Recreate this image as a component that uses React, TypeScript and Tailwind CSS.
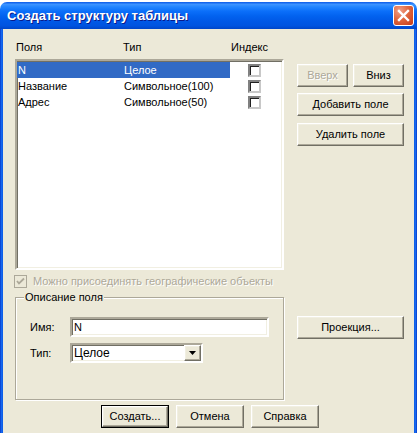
import type { ReactNode } from 'react';

const FIELDS = [
  { name: 'N', type: 'Целое' },
  { name: 'Название', type: 'Символьное(100)' },
  { name: 'Адрес', type: 'Символьное(50)' },
];

const raised =
  'border border-t-white border-l-white border-b-[#716f64] border-r-[#716f64] shadow-[inset_-1px_-1px_0_#aca899,inset_1px_1px_0_#f1efe2] bg-[#ece9d8]';
const sunken =
  'border-2 border-t-[#aca899] border-l-[#aca899] border-b-white border-r-white shadow-[inset_1px_1px_0_#716f64,inset_-1px_-1px_0_#f1efe2]';

function Btn({
  children,
  className = '',
  disabled = false,
  isDefault = false,
}: {
  children: ReactNode;
  className?: string;
  disabled?: boolean;
  isDefault?: boolean;
}) {
  const inner = (
    <div
      className={`flex h-full w-full items-center justify-center ${raised} ${
        disabled ? 'text-[#aca899] [text-shadow:1px_1px_0_#fff]' : 'text-black'
      }`}
    >
      {children}
    </div>
  );
  if (isDefault) {
    return <div className={`h-[23px] border border-black ${className}`}>{inner}</div>;
  }
  return <div className={`h-[23px] ${className}`}>{inner}</div>;
}

function CheckBox() {
  return (
    <div className="ml-[18px] h-[13px] w-[13px] shrink-0 border-2 border-t-[#808080] border-l-[#808080] border-b-[#c8c8c8] border-r-[#c8c8c8] bg-white shadow-[inset_1px_1px_0_#202020]" />
  );
}

export default function App() {
  return (
    <div className="h-[433px] w-[417px] overflow-hidden bg-white font-['Liberation_Sans',Arial,sans-serif] text-[11px] leading-[13px] text-black">
      <div className="mt-[2px] flex h-[431px] flex-col overflow-hidden rounded-t-[7px]">
        {/* title bar */}
        <div className="flex h-[27px] shrink-0 items-center bg-[linear-gradient(180deg,#0a5ae8_0%,#3c93ff_9%,#2285ff_18%,#0b6ffa_34%,#0262ef_52%,#0058e6_72%,#0054e0_88%,#0045c8_100%)] pl-[7px] pr-[3px]">
          <span className="flex-1 font-['Liberation_Sans',Arial,sans-serif] text-[13px] font-bold text-white [text-shadow:1px_1px_0_#0a1a8a]">
            Создать структуру таблицы
          </span>
          <span className="flex h-[21px] w-[21px] items-center justify-center rounded-[3px] border border-white bg-[radial-gradient(circle_at_30%_25%,#f0a088_0%,#e06840_45%,#c53a17_100%)]">
            <svg width="13" height="13" viewBox="0 0 13 13">
              <path d="M2 2 L11 11 M11 2 L2 11" stroke="#fff" strokeWidth="2.4" strokeLinecap="square" />
            </svg>
          </span>
        </div>

        <div className="flex flex-1">
          <div className="w-[3px] bg-[linear-gradient(90deg,#0838c8,#1668ee,#0b5ae6)]" />
          <div className="flex flex-1 flex-col bg-[#ece9d8] pl-[12px]">
            <div className="flex">
              {/* left column */}
              <div className="flex w-[269px] flex-col">
                <div className="mt-[12px] flex h-[13px]">
                  <span className="w-[108px] pl-[1px]">Поля</span>
                  <span className="w-[108px]">Тип</span>
                  <span>Индекс</span>
                </div>

                <div className={`mt-[5px] h-[211px] bg-white ${sunken} pt-[1px]`}>
                  {FIELDS.map((f, i) => (
                    <div key={f.name} className="flex h-[16px] items-center">
                      <div
                        className={`flex h-full w-[213px] items-center ${
                          i === 0 ? 'bg-[#316ac5] text-white' : ''
                        }`}
                      >
                        <span className="w-[107px] pl-[1px]">{f.name}</span>
                        <span>{f.type}</span>
                      </div>
                      <CheckBox />
                    </div>
                  ))}
                </div>

                <div className="-ml-[1px] mt-[5px] flex h-[13px] items-center gap-[6px]">
                  <span className="flex h-[13px] w-[13px] items-center justify-center border border-[#aca899] bg-[#ece9d8]">
                    <svg width="9" height="9" viewBox="0 0 9 9">
                      <path d="M1 4 L3 6.5 L8 1.5" stroke="#aca899" strokeWidth="1.8" fill="none" />
                    </svg>
                  </span>
                  <span className="text-[#aca899] [text-shadow:1px_1px_0_#fff]">
                    Можно присоединять географические объекты
                  </span>
                </div>

                {/* group box */}
                <div className="relative mt-[9px] h-[103px] border border-[#aca899] shadow-[inset_1px_1px_0_#fff,1px_1px_0_#fff]">
                  <span className="absolute -top-[7px] left-[8px] bg-[#ece9d8] px-[1px]">Описание поля</span>
                  <div className="mt-[19px] flex items-center">
                    <span className="w-[54px] pl-[14px]">Имя:</span>
                    <div className={`flex h-[20px] w-[199px] items-center bg-white pl-[2px] ${sunken}`}>N</div>
                  </div>
                  <div className="mt-[6px] flex items-center">
                    <span className="w-[54px] pl-[14px]">Тип:</span>
                    <div className={`flex h-[20px] w-[133px] items-center bg-white pl-[2px] ${sunken}`}>
                      <span className="flex-1 text-[12px]">Целое</span>
                      <span className={`flex h-[16px] w-[17px] items-center justify-center ${raised}`}>
                        <svg width="7" height="4" viewBox="0 0 7 4">
                          <path d="M0 0 H7 L3.5 4 Z" fill="#000" />
                        </svg>
                      </span>
                    </div>
                  </div>
                </div>
              </div>

              {/* right column */}
              <div className="ml-[13px] flex w-[107px] flex-col">
                <div className="mt-[35px] flex gap-[5px]">
                  <Btn className="w-[51px]" disabled>
                    Вверх
                  </Btn>
                  <Btn className="w-[51px]">Вниз</Btn>
                </div>
                <Btn className="mt-[6px] w-[107px]">Добавить поле</Btn>
                <Btn className="mt-[7px] w-[107px]">Удалить поле</Btn>
                <Btn className="mt-[170px] w-[107px]">Проекция...</Btn>
              </div>
            </div>

            <div className="ml-[86px] mt-[5px] flex gap-[7px]">
              <Btn className="w-[68px]" isDefault>
                Создать...
              </Btn>
              <Btn className="w-[68px]">Отмена</Btn>
              <Btn className="w-[68px]">Справка</Btn>
            </div>
          </div>
          <div className="w-[3px] bg-[linear-gradient(90deg,#0b5ae6,#1668ee,#0838c8)]" />
        </div>
      </div>
    </div>
  );
}
